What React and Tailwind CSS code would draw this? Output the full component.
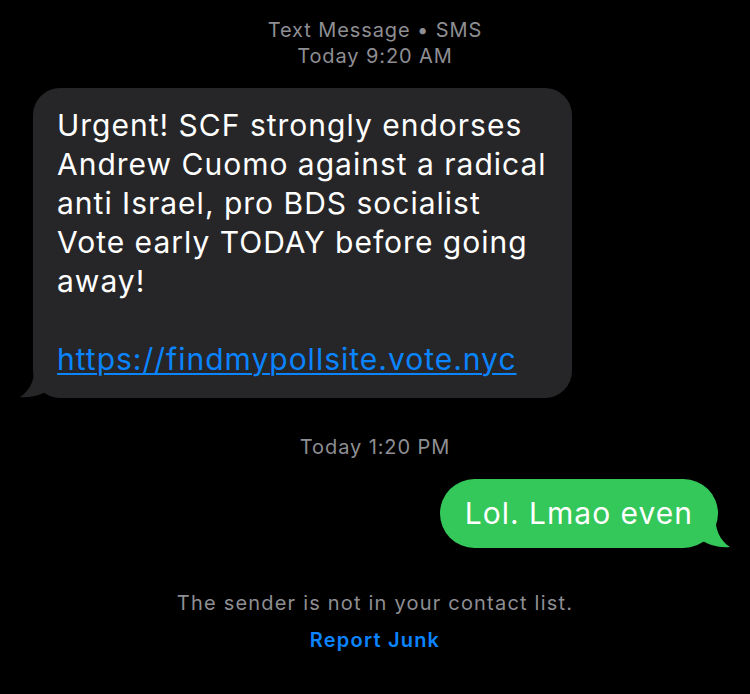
export default function App() {
  const sans = { fontFamily: "Inter, 'Noto Sans', sans-serif" };
  return (
    <div className="w-[750px] h-[694px] bg-black overflow-hidden flex flex-col" style={sans}>
      <div className="pt-[17px] flex flex-col items-center text-[20px] leading-[26px] text-[#8e8e93] tracking-[0.9px]">
        <div>Text Message • SMS</div>
        <div>Today 9:20 AM</div>
      </div>

      <div className="mt-[19px] pl-[33px] flex">
        <div className="relative">
          <div className="relative z-10 w-[539px] h-[310px] bg-[#262628] rounded-[27px] pl-[24px] pt-[18px] text-[30px] leading-[39px] text-white tracking-[1px] whitespace-nowrap">
            <div>Urgent! SCF strongly endorses</div>
            <div>Andrew Cuomo against a radical</div>
            <div>anti Israel, pro BDS socialist</div>
            <div>Vote early TODAY before going</div>
            <div>away!</div>
            <div>&nbsp;</div>
            <div className="text-[#0a84ff] underline underline-offset-[3px] decoration-[2px]">https://findmypollsite.vote.nyc</div>
          </div>
          <svg className="absolute left-[-14px] bottom-[0px]" width="40" height="34" viewBox="0 0 40 34">
            <path d="M16 0 C16 14 12 26 1 33 C12 34 22 31 30 26 L40 20 L40 0 Z" fill="#262628" />
          </svg>
        </div>
      </div>

      <div className="mt-[36px] text-center text-[20px] leading-[26px] text-[#8e8e93] tracking-[0.9px]">
        Today 1:20 PM
      </div>

      <div className="mt-[19px] pr-[32px] flex justify-end">
        <div className="relative">
          <div className="relative z-10 h-[69px] bg-[#34c759] rounded-[35px] px-[25px] flex items-center text-[30px] text-white tracking-[1px] whitespace-nowrap">
            Lol. Lmao even
          </div>
          <svg className="absolute right-[-13px] bottom-[0px]" width="40" height="34" viewBox="0 0 40 34">
            <path d="M24 0 C24 14 28 26 39 33 C28 34 18 31 10 26 L0 20 L0 0 Z" fill="#34c759" />
          </svg>
        </div>
      </div>

      <div className="mt-[42px] text-center text-[20px] leading-[26px] text-[#8e8e93] tracking-[1.2px]">
        The sender is not in your contact list.
      </div>
      <div className="mt-[11px] text-center text-[20px] leading-[26px] text-[#0a84ff] font-semibold tracking-[1.2px]">
        Report Junk
      </div>
    </div>
  );
}
